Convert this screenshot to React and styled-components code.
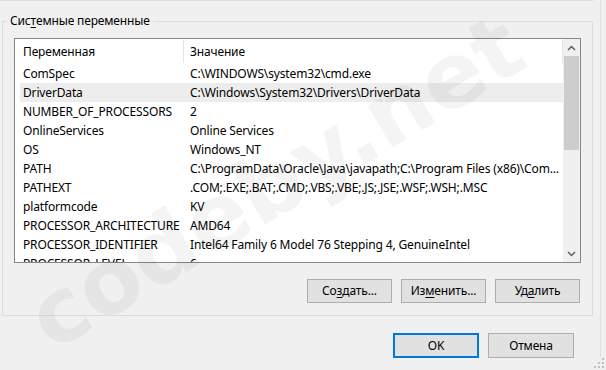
import React from 'react';
import styled, { createGlobalStyle } from 'styled-components';

const Global = createGlobalStyle`
  html, body { margin: 0; padding: 0; background: #f0f0f0; }
  body {
    font-family: "Noto Sans", "DejaVu Sans", sans-serif;
    font-size: 12px;
    letter-spacing: -0.15px;
    color: #000;
  }
  * { box-sizing: border-box; }
`;

const Page = styled.div`
  position: relative;
  width: 606px;
  height: 370px;
  overflow: hidden;
  background: #f0f0f0;
`;

const Dialog = styled.div`
  width: 601px;
  height: 356px;
  border-right: 1px solid #dfdfdf;
  display: flex;
  flex-direction: column;
`;

const TopEdge = styled.div`
  width: 593px;
  height: 5px;
  border-bottom: 1px solid #dcdcdc;
  border-right: 1px solid #dcdcdc;
`;

const GroupBox = styled.fieldset`
  margin: 12px 0 0 2px;
  padding: 0;
  width: 591px;
  border: 1px solid #dcdcdc;
  min-width: 0;
`;

const Legend = styled.legend`
  margin-left: 4px;
  padding: 0 3px;
  font-size: 12px;
  line-height: 16px;
`;

const GroupBody = styled.div`
  padding: 9px 11px 12px 11px;
  display: flex;
  flex-direction: column;
`;

const ListBox = styled.div`
  width: 567px;
  height: 225px;
  border: 1px solid #828790;
  background: #fff;
  display: flex;
`;

const ListContent = styled.div`
  width: 548px;
  display: flex;
  flex-direction: column;
  overflow: hidden;
`;

const Header = styled.div`
  height: 25px;
  flex: none;
  display: flex;
  align-items: flex-start;
`;

const HeaderCell = styled.div`
  margin-top: 1px;
  height: 23px;
  line-height: 23px;
  border-right: 1px solid #e5e5e5;
  padding-left: ${(p) => p.$pad}px;
  width: ${(p) => (p.$w ? `${p.$w}px` : 'auto')};
  flex: ${(p) => (p.$w ? 'none' : '1')};
  white-space: nowrap;
`;

const Rows = styled.div`
  flex: 1;
  overflow: hidden;
`;

const Row = styled.div`
  margin-left: 5px;
  height: 19px;
  line-height: 19px;
  display: flex;
  background: ${(p) => (p.$selected ? '#ededed' : 'transparent')};
`;

const NameCell = styled.div`
  width: 163px;
  flex: none;
  padding-left: 3px;
  white-space: nowrap;
  overflow: hidden;
`;

const ValueCell = styled.div`
  flex: 1;
  padding-left: 7px;
  white-space: nowrap;
  overflow: hidden;
`;

const ScrollBar = styled.div`
  width: 17px;
  flex: none;
  background: #f0f0f0;
  display: flex;
  flex-direction: column;
`;

const ArrowBtn = styled.div`
  height: 17px;
  flex: none;
  display: flex;
  align-items: center;
  justify-content: center;
`;

const Track = styled.div`
  flex: 1;
`;

const Thumb = styled.div`
  margin: 0 1px;
  height: 94px;
  background: #cdcdcd;
`;

const ButtonRow = styled.div`
  display: flex;
  justify-content: flex-end;
  gap: ${(p) => p.$gap}px;
  margin-top: ${(p) => p.$top}px;
  padding-right: ${(p) => p.$right}px;
`;

const Button = styled.button`
  width: ${(p) => p.$w}px;
  height: ${(p) => p.$h}px;
  padding: 0;
  margin: 0;
  background: #e1e1e1;
  border: ${(p) => (p.$primary ? '2px solid #0078d7' : '1px solid #adadad')};
  font-family: inherit;
  font-size: 12px;
  letter-spacing: -0.15px;
  color: #000;
  line-height: 1;
`;

const Accel = styled.span`
  text-decoration: underline;
  text-underline-offset: 2px;
`;

const Watermark = styled.div`
  position: absolute;
  left: 50%;
  top: 50%;
  transform: translate(-55%, -53%) rotate(-31deg);
  font-family: "DejaVu Sans", sans-serif;
  font-weight: bold;
  font-size: 90px;
  letter-spacing: 0;
  color: rgba(0, 0, 0, 0.045);
  white-space: nowrap;
  pointer-events: none;
`;

const Grip = styled.svg`
  position: absolute;
  right: 1px;
  bottom: 1px;
`;

const rows = [
  ['ComSpec', 'C:\\WINDOWS\\system32\\cmd.exe'],
  ['DriverData', 'C:\\Windows\\System32\\Drivers\\DriverData', true],
  ['NUMBER_OF_PROCESSORS', '2'],
  ['OnlineServices', 'Online Services'],
  ['OS', 'Windows_NT'],
  ['PATH', 'C:\\ProgramData\\Oracle\\Java\\javapath;C:\\Program Files (x86)\\Com...'],
  ['PATHEXT', '.COM;.EXE;.BAT;.CMD;.VBS;.VBE;.JS;.JSE;.WSF;.WSH;.MSC'],
  ['platformcode', 'KV'],
  ['PROCESSOR_ARCHITECTURE', 'AMD64'],
  ['PROCESSOR_IDENTIFIER', 'Intel64 Family 6 Model 76 Stepping 4, GenuineIntel'],
  ['PROCESSOR_LEVEL', '6'],
];

const Chevron = ({ up }) => (
  <svg width="9" height="6" viewBox="0 0 9 6">
    <polyline
      points={up ? '1,5 4.5,1.5 8,5' : '1,1 4.5,4.5 8,1'}
      fill="none"
      stroke="#606060"
      strokeWidth="1.5"
    />
  </svg>
);

export default function App() {
  return (
    <Page>
      <Global />
      <Dialog>
        <TopEdge />
        <GroupBox>
          <Legend>
            Сис<Accel>т</Accel>емные переменные
          </Legend>
          <GroupBody>
            <ListBox>
              <ListContent>
                <Header>
                  <HeaderCell $w={169} $pad={8}>Переменная</HeaderCell>
                  <HeaderCell $pad={6}>Значение</HeaderCell>
                </Header>
                <Rows>
                  {rows.map(([n, v, sel]) => (
                    <Row key={n} $selected={sel}>
                      <NameCell>{n}</NameCell>
                      <ValueCell>{v}</ValueCell>
                    </Row>
                  ))}
                </Rows>
              </ListContent>
              <ScrollBar>
                <ArrowBtn><Chevron up /></ArrowBtn>
                <Track><Thumb /></Track>
                <ArrowBtn><Chevron /></ArrowBtn>
              </ScrollBar>
            </ListBox>
            <ButtonRow $gap={9} $top={16} $right={1}>
              <Button $w={85} $h={24}>Со<Accel>з</Accel>дать...</Button>
              <Button $w={85} $h={24}>Из<Accel>м</Accel>енить...</Button>
              <Button $w={85} $h={24}>Уд<Accel>а</Accel>лить</Button>
            </ButtonRow>
          </GroupBody>
        </GroupBox>
        <ButtonRow $gap={9} $top={17} $right={26}>
          <Button $w={86} $h={25} $primary>OK</Button>
          <Button $w={86} $h={25}>Отмена</Button>
        </ButtonRow>
      </Dialog>
      <Watermark>codeby.net</Watermark>
      <Grip width="11" height="11" viewBox="0 0 11 11">
        {[[8, 0], [8, 4], [4, 4], [8, 8], [4, 8], [0, 8]].map(([x, y]) => (
          <rect key={`${x}-${y}`} x={x} y={y} width="2" height="2" fill="#c0c0c0" />
        ))}
      </Grip>
    </Page>
  );
}
